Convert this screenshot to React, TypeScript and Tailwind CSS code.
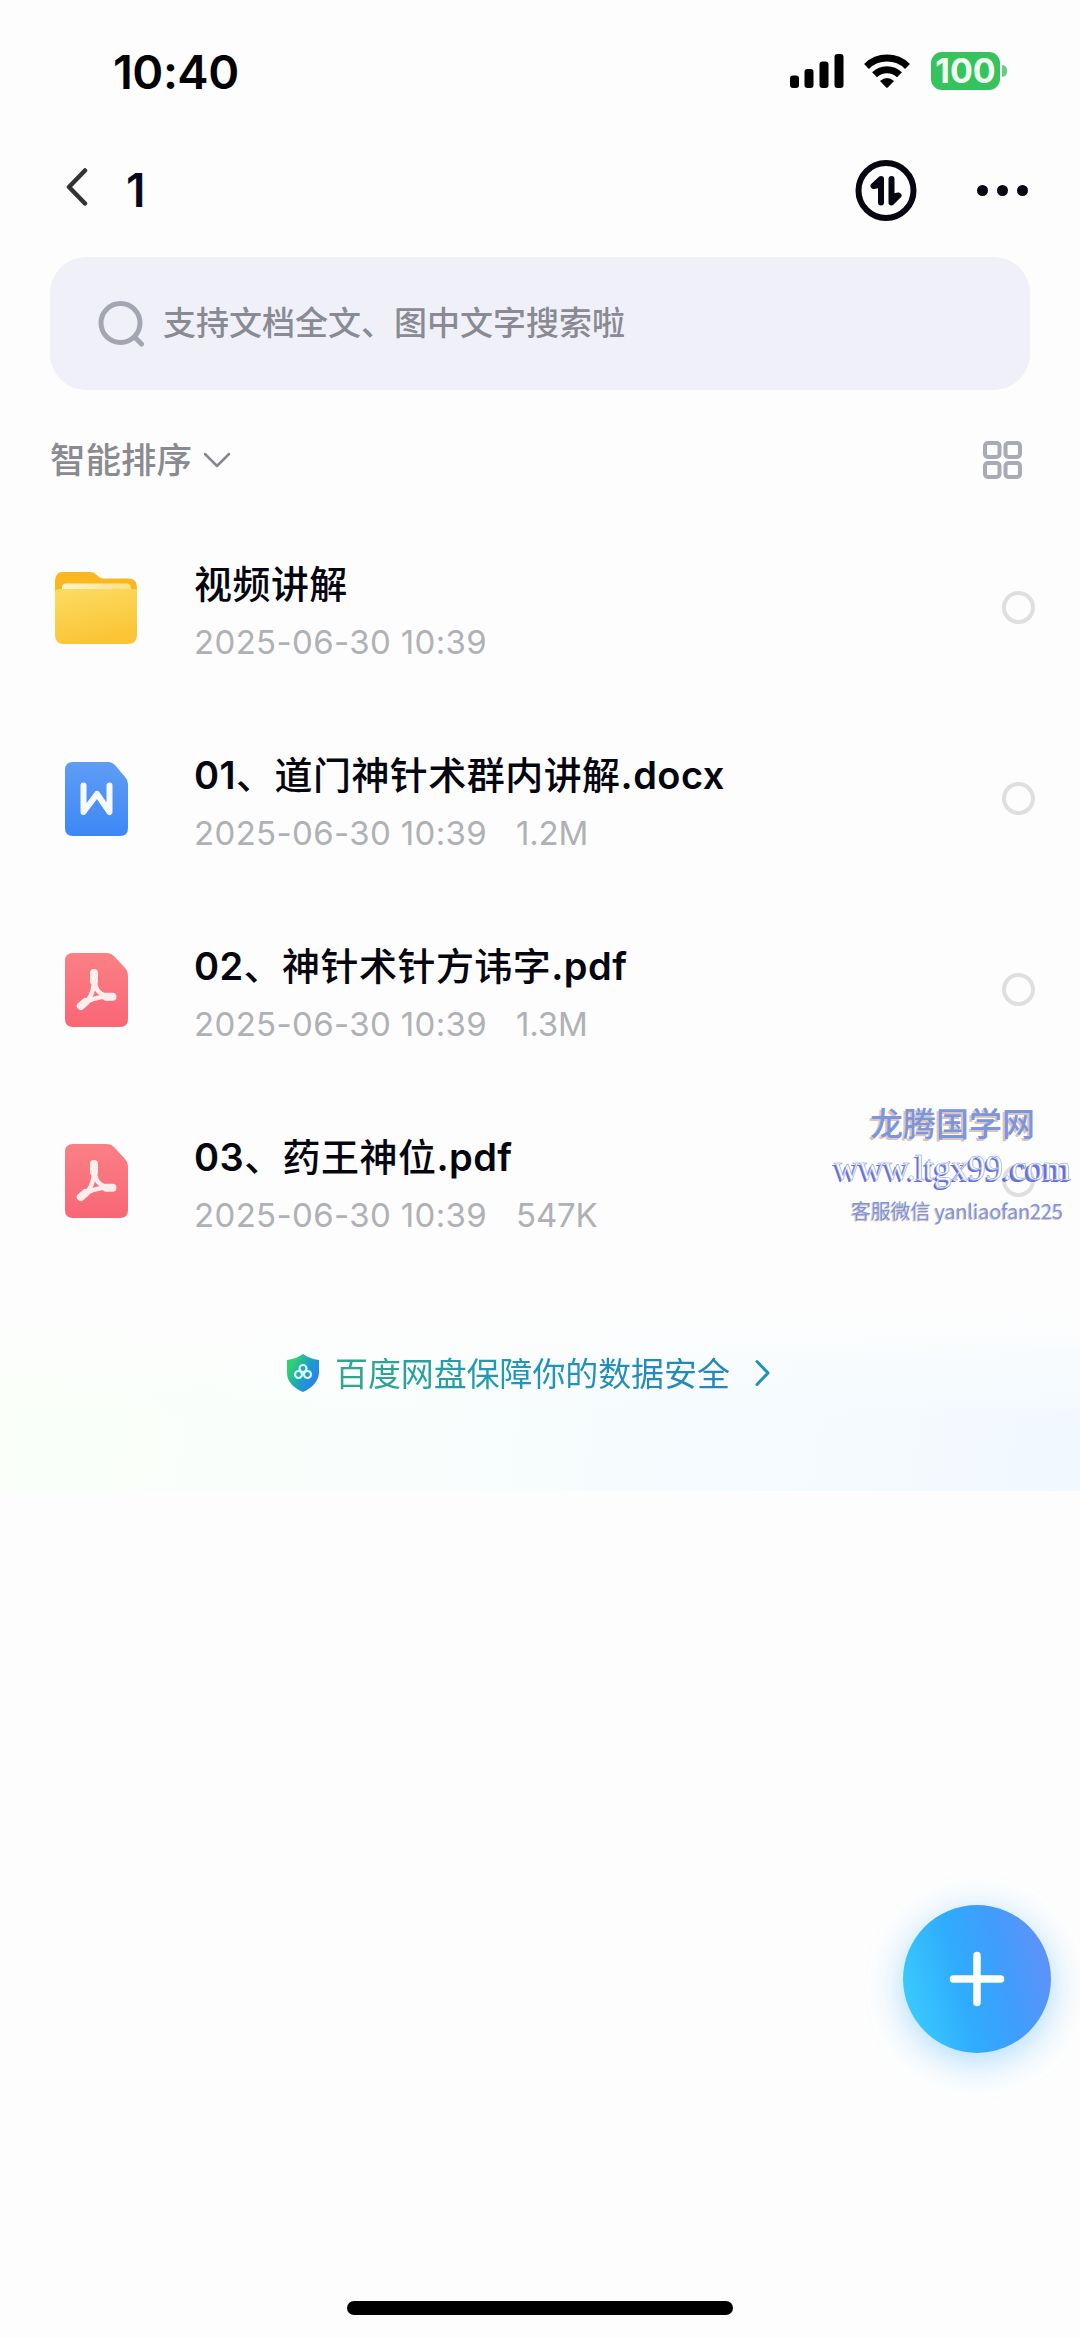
import type { ReactNode } from 'react';

type FileItem = {
  name: string;
  date: string;
  size?: string;
  kind: 'folder' | 'word' | 'pdf';
};

const files: FileItem[] = [
  { name: '视频讲解', date: '2025-06-30 10:39', kind: 'folder' },
  { name: '01、道门神针术群内讲解.docx', date: '2025-06-30 10:39', size: '1.2M', kind: 'word' },
  { name: '02、神针术针方讳字.pdf', date: '2025-06-30 10:39', size: '1.3M', kind: 'pdf' },
  { name: '03、药王神位.pdf', date: '2025-06-30 10:39', size: '547K', kind: 'pdf' },
];

function FolderIcon() {
  return (
    <svg width="82" height="72" viewBox="0 0 82 72">
      <defs>
        <linearGradient id="folderFront" x1="0" y1="0" x2="0.3" y2="1">
          <stop offset="0" stopColor="#fddb62" />
          <stop offset="1" stopColor="#fac536" />
        </linearGradient>
        <linearGradient id="folderPaper" x1="0" y1="0" x2="1" y2="0">
          <stop offset="0" stopColor="#fff4d0" />
          <stop offset="1" stopColor="#fddf80" />
        </linearGradient>
      </defs>
      <path d="M0 18V9Q0 0 8 0H35Q39 0 42 3L44 5Q46 6.500 49 6.500H73Q82 6.500 82 15V40H0Z" fill="#fab71e" />
      <path d="M7 20V15Q7 11.500 11 11.500H71Q76 11.500 76 16V24H7Z" fill="url(#folderPaper)" />
      <path d="M0 21Q0 17 4 17H78Q82 17 82 18V63Q82 72 73 72H9Q0 72 0 63Z" fill="url(#folderFront)" />
    </svg>
  );
}

function WordIcon() {
  return (
    <svg width="63" height="74" viewBox="0 0 63 74">
      <defs>
        <linearGradient id="wordBg" x1="0" y1="0" x2="0" y2="1">
          <stop offset="0" stopColor="#5f9df5" />
          <stop offset="1" stopColor="#3d87f6" />
        </linearGradient>
      </defs>
      <path d="M8 0H43Q47 0 50 3L60 15Q63 18 63 22V66Q63 74 55 74H8Q0 74 0 66V8Q0 0 8 0Z" fill="url(#wordBg)" />
      <path d="M18.500 23.500V50L32 32L44.500 50V23.500" fill="none" stroke="#f4faff" strokeWidth="6" strokeLinecap="round" strokeLinejoin="round" />
    </svg>
  );
}

function PdfIcon() {
  return (
    <svg width="63" height="74" viewBox="0 0 63 74">
      <defs>
        <linearGradient id="pdfBg" x1="0" y1="0" x2="0" y2="1">
          <stop offset="0" stopColor="#fa8084" />
          <stop offset="1" stopColor="#f96676" />
        </linearGradient>
      </defs>
      <path d="M8 0H42Q46 0 49 3L60 15Q63 18 63 22V66Q63 74 55 74H8Q0 74 0 66V8Q0 0 8 0Z" fill="url(#pdfBg)" />
      <g fill="none" stroke="#fdeeee" strokeLinecap="round" strokeLinejoin="round">
        <path d="M29 20Q29 32 33 38Q38 43.500 48 43.500" strokeWidth="4.500" />
        <path d="M29 20Q30 33 26 42Q22 50 15.500 53.500" strokeWidth="4.500" />
        <path d="M15.500 53.500Q26 43 48 43.500" strokeWidth="4.500" />
        <path d="M29 20V28" strokeWidth="8" />
        <path d="M41.500 43.800H47.500" strokeWidth="8" />
        <path d="M15.800 53L20.500 49" strokeWidth="8" />
      </g>
    </svg>
  );
}

const icons: Record<FileItem['kind'], ReactNode> = {
  folder: <FolderIcon />,
  word: <WordIcon />,
  pdf: <PdfIcon />,
};

function StatusBar() {
  return (
    <div className="flex h-[142px] items-center justify-between pr-[73px] pl-[113px]">
      <span className="text-[47px] leading-none font-semibold tracking-[-0.5px] text-black">10:40</span>
      <div className="flex items-center">
        <svg width="54" height="34" viewBox="0 0 54 34" className="mr-[20px]">
          <rect x="0" y="21.500" width="9" height="12.500" rx="3" />
          <rect x="14.500" y="15" width="9" height="19" rx="3" />
          <rect x="29.500" y="7.500" width="9" height="26.500" rx="3" />
          <rect x="44.500" y="0" width="9" height="34" rx="3" />
        </svg>
        <svg width="46" height="34" viewBox="0 0 46 34" className="mr-[21px]">
          <path d="M2.500 12.400A29.500 29.500 0 0 1 43.500 12.400" fill="none" stroke="#000" strokeWidth="7" />
          <path d="M10.500 20.800A18 18 0 0 1 35.500 20.800" fill="none" stroke="#000" strokeWidth="7" />
          <path d="M16 27Q23 21 30 27L24 33.300Q23 34.300 22 33.300Z" />
        </svg>
        <div className="flex h-[38px] w-[69px] items-center justify-center rounded-[11px] bg-[#36c25c] text-[34px] leading-none font-bold text-[#f0fff2]">
          100
        </div>
        <div className="ml-[2px] h-[12px] w-[5px] rounded-r-full bg-[#62cf80]" />
      </div>
    </div>
  );
}

function Header() {
  return (
    <div className="flex h-[96px] items-center pr-[52px] pl-[66px]">
      <svg width="22" height="38" viewBox="0 0 22 38" className="mb-[7px]">
        <path d="M19 2.500L3 19L19 35.500" fill="none" stroke="#333" strokeWidth="4.500" strokeLinecap="round" strokeLinejoin="round" />
      </svg>
      <span className="ml-[38px] text-[46px] leading-none font-semibold text-[#08081c]">1</span>
      <div className="ml-auto flex items-center gap-[60px]">
        <svg width="62" height="62" viewBox="0 0 62 62" fill="none" stroke="#05060f" strokeLinecap="round" strokeLinejoin="round">
          <circle cx="31" cy="31.500" r="27.500" strokeWidth="6" />
          <path d="M26 43.500V20L18.500 27L26 25.500" strokeWidth="6" />
          <path d="M36.500 20V43.500L43.500 36.500L36.500 38" strokeWidth="6" />
        </svg>
        <div className="flex gap-[9px]">
          <span className="size-[11px] rounded-full bg-[#05060f]" />
          <span className="size-[11px] rounded-full bg-[#05060f]" />
          <span className="size-[11px] rounded-full bg-[#05060f]" />
        </div>
      </div>
    </div>
  );
}

function SearchBox() {
  return (
    <div className="mx-[50px] mt-[19px] flex h-[133px] items-center rounded-[36px] bg-[#f0f0f9] pl-[48px]">
      <svg width="46" height="46" viewBox="0 0 46 46" fill="none" stroke="#a3a5b1" strokeWidth="5" strokeLinecap="round">
        <circle cx="22.500" cy="22" r="19.500" />
        <path d="M37 36.500L43.500 43" />
      </svg>
      <span className="ml-[19px] text-[33px] leading-none font-medium text-[#898a93]">支持文档全文、图中文字搜索啦</span>
    </div>
  );
}

function SortBar() {
  return (
    <div className="mt-[35px] flex h-[70px] items-center pr-[58px] pl-[50px] text-[#85878c]">
      <span className="mt-[2px] text-[35.5px] leading-none font-medium text-[#898b90]">智能排序</span>
      <svg width="28" height="18" viewBox="0 0 28 18" className="ml-[11px]">
        <path d="M2 3L14 15L26 3" fill="none" stroke="#85878c" strokeWidth="2.500" strokeLinecap="round" strokeLinejoin="round" />
      </svg>
      <svg width="39" height="38" viewBox="0 0 39 38" className="ml-auto" fill="none" stroke="#a8aab8" strokeWidth="4">
        <rect x="2" y="2" width="14.500" height="14" rx="3" />
        <rect x="22.500" y="2" width="14.500" height="14" rx="3" />
        <rect x="2" y="22" width="14.500" height="14" rx="3" />
        <rect x="22.500" y="22" width="14.500" height="14" rx="3" />
      </svg>
    </div>
  );
}

// Latin runs are set one step heavier than the Chinese ones
function FileName({ name }: { name: string }) {
  return (
    <div className="text-[38px] leading-[52px] font-medium tracking-[0.45px] whitespace-nowrap text-[#05060f]">
      {name.split(/([\x21-\x7e]+)/).map((part, i) =>
        i % 2 ? (
          <span key={i} className="font-semibold">
            {part}
          </span>
        ) : (
          part
        ),
      )}
    </div>
  );
}

function FileRow({ file }: { file: FileItem }) {
  return (
    <div className="flex h-[191px] items-center pr-[45px] pl-[50px]">
      <div className="flex w-[92px] justify-center">{icons[file.kind]}</div>
      <div className="mt-[6px] ml-[52px]">
        <FileName name={file.name} />
        <div className="mt-[10px] flex gap-[29px] text-[33px] leading-[44px] text-[#b0b1b5]">
          <span className="tracking-[0.35px]">{file.date}</span>
          {file.size && <span className="tracking-[-0.2px]">{file.size}</span>}
        </div>
      </div>
      <span className="ml-auto size-[33px] rounded-full border-4 border-[#dfdfdf]" />
    </div>
  );
}

function SecurityBanner() {
  return (
    <div className="mt-[29px] flex h-[186px] items-start bg-[linear-gradient(to_bottom,#fdfdfd,#fdfdfd00_60%),linear-gradient(100deg,#f9fff8,#f9fdfc_40%,#f5fbfe_65%,#f2f9fe)] pt-[49px] pl-[286px]">
      <svg width="34" height="38" viewBox="0 0 34 38">
        <defs>
          <linearGradient id="shield" x1="0" y1="0.2" x2="1" y2="0.8">
            <stop offset="0.15" stopColor="#2fcf74" />
            <stop offset="0.55" stopColor="#1c9fc8" />
            <stop offset="0.9" stopColor="#2c7ff5" />
          </linearGradient>
        </defs>
        <path d="M17 0Q24 5 33 6V19Q32 31 17 38Q1 31 1 19V6Q10 5 17 0Z" fill="url(#shield)" />
        <g fill="none" stroke="#d9f7fb" strokeWidth="2.200">
          <circle cx="17" cy="14.500" r="3.500" />
          <circle cx="12.500" cy="20.500" r="3.500" />
          <circle cx="21.500" cy="20.500" r="3.500" />
        </g>
      </svg>
      <span className="ml-[15px] bg-linear-to-r from-[#2fa88a] via-[#2195b8] to-[#2584bd] bg-clip-text text-[33px] leading-[40px] tracking-[-0.1px] text-transparent">
        百度网盘保障你的数据安全
      </span>
      <svg width="18" height="28" viewBox="0 0 18 28" className="mt-[5px] ml-[24px]">
        <path d="M3 2.500L14 14L3 25.500" fill="none" stroke="#2590b8" strokeWidth="3" strokeLinecap="round" strokeLinejoin="round" />
      </svg>
    </div>
  );
}

// Site stamp that sits over the last row's checkbox
function Watermark() {
  return (
    <div className="absolute top-[1100px] left-[834px] w-[241px] whitespace-nowrap text-[#7b95df]">
      <div className="pl-[36px] text-[33px] leading-[48px] font-medium [text-shadow:-2px_2px_0_#dcc4b8]">龙腾国学网</div>
      <div className="font-['Liberation_Serif',serif] text-[35px] leading-[42px] tracking-[-0.3px] text-white [-webkit-text-stroke:0.6px_#8b98e6] [text-shadow:-2px_2px_0_#6673d6]">
        www.ltgx99<span className="[text-shadow:-1px_1px_0_#6673d6,-3px_2px_0_#6673d6]">.com</span>
      </div>
      <div className="pl-[17px] font-['Noto_Sans_CJK_SC',sans-serif] text-[20px] leading-[42px] tracking-[-0.2px] [text-shadow:-1px_1px_0_#dcc4b8]">
        客服微信 yanliaofan225
      </div>
    </div>
  );
}

export default function App() {
  return (
    <div className="relative flex h-[2338px] w-[1080px] flex-col overflow-hidden bg-[#fdfdfd] font-['Inter','Noto_Sans_CJK_SC',sans-serif]">
      <StatusBar />
      <Header />
      <SearchBox />
      <SortBar />
      <div className="mt-[17px]">
        {files.map((file) => (
          <FileRow key={file.name} file={file} />
        ))}
      </div>
      <SecurityBanner />
      <Watermark />

      <button className="absolute top-[1905px] left-[903px] flex size-[148px] items-center justify-center rounded-full bg-[linear-gradient(75deg,#3cd2fd,#2facfd_40%,#3f9dfc_65%,#6a8ef8)] shadow-[0_8px_36px_#2ea8fd66]">
        <svg width="56" height="56" viewBox="0 0 56 56">
          <path d="M28 4.500V51.500M4.500 28H51.500" stroke="#fff" strokeWidth="7.500" strokeLinecap="round" />
        </svg>
      </button>

      <div className="mx-auto mt-auto mb-[23px] h-[14px] w-[386px] rounded-full bg-black" />
    </div>
  );
}
